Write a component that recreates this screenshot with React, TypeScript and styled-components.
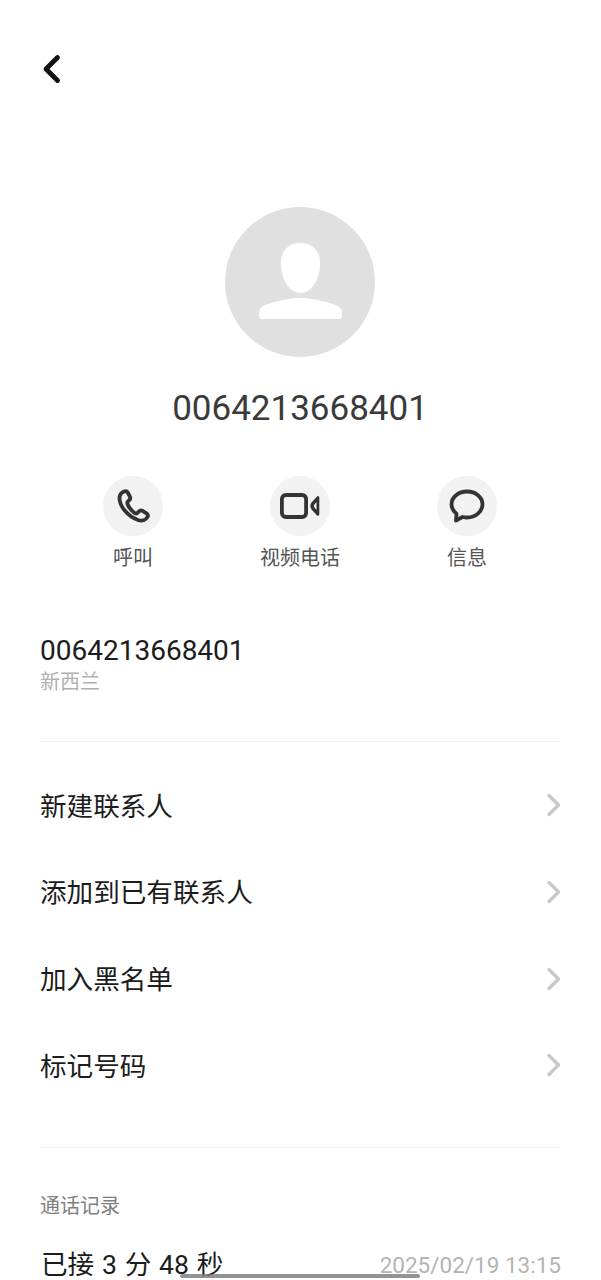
import React from 'react';
import styled, { createGlobalStyle } from 'styled-components';

const GlobalStyle = createGlobalStyle`
  html, body {
    margin: 0;
    padding: 0;
    background: #fff;
  }
  body {
    font-family: Roboto, "Noto Sans CJK SC", sans-serif;
  }
`;

const Screen = styled.div`
  position: relative;
  width: 601px;
  height: 1280px;
  overflow: hidden;
  background: #fff;
  box-sizing: border-box;
  padding: 0 40px;
`;

const BackButton = styled.div`
  height: 207px;
  padding-top: 52px;
  box-sizing: border-box;
  svg {
    display: block;
  }
`;

const Profile = styled.div`
  display: flex;
  flex-direction: column;
  align-items: center;
  padding-right: 1px;
`;

const Avatar = styled.div`
  width: 150px;
  height: 150px;
  border-radius: 50%;
  background: #e0e0e0;
  display: flex;
  align-items: center;
  justify-content: center;
`;

const Title = styled.div`
  margin-top: 30px;
  font-size: 35px;
  line-height: 44px;
  color: #3a3a3a;
`;

const Actions = styled.div`
  display: grid;
  grid-template-columns: repeat(3, 167px);
  justify-content: center;
  margin-top: 45px;
  padding-right: 1px;
`;

const Action = styled.div`
  display: flex;
  flex-direction: column;
  align-items: center;
`;

const ActionCircle = styled.div`
  width: 60px;
  height: 60px;
  border-radius: 50%;
  background: #f2f2f2;
  display: flex;
  align-items: center;
  justify-content: center;
`;

const ActionLabel = styled.div`
  margin-top: 8px;
  font-size: 20px;
  line-height: 28px;
  color: #555;
`;

const NumberBlock = styled.div`
  margin-top: 61px;
  padding-bottom: 46px;
  border-bottom: 1px solid #f0f0f0;
`;

const Number = styled.div`
  font-size: 28px;
  line-height: 36px;
  color: #1c1c1c;
`;

const Region = styled.div`
  font-size: 20px;
  line-height: 26px;
  color: #b0b0b0;
`;

const MenuList = styled.div`
  padding: 19px 0 39px;
  border-bottom: 1px solid #f0f0f0;
`;

const MenuRow = styled.div`
  height: 86.67px;
  display: flex;
  align-items: center;
  justify-content: space-between;
  font-size: 26.6px;
  color: #1c1c1c;
  svg {
    margin-top: 2px;
  }
`;

const SectionLabel = styled.div`
  margin-top: 44px;
  font-size: 20px;
  line-height: 28px;
  color: #808080;
`;

const CallRow = styled.div`
  margin-top: 27px;
  display: flex;
  align-items: center;
  justify-content: space-between;
  line-height: 36px;
`;

const CallResult = styled.div`
  font-size: 26.6px;
  word-spacing: 1.2px;
  color: #1c1c1c;
  padding-left: 1px;
`;

const CallTime = styled.div`
  font-size: 22.5px;
  color: #b4b4b4;
`;

const HomeBar = styled.div`
  position: absolute;
  left: 180px;
  bottom: 2px;
  width: 240px;
  height: 4px;
  border-radius: 2px;
  background: rgba(120, 120, 120, 0.8);
`;

const Chevron = () => (
  <svg width="16" height="24" viewBox="0 0 16 24" fill="none">
    <path d="M4 2.500 L13.500 12 L4 21.500" stroke="#c8c8c8" strokeWidth="3.400" strokeLinecap="round" strokeLinejoin="round" />
  </svg>
);

const menuItems = ['新建联系人', '添加到已有联系人', '加入黑名单', '标记号码'];

export default function App() {
  return (
    <Screen>
      <GlobalStyle />
      <BackButton>
        <svg width="24" height="34" viewBox="0 0 24 34" fill="none">
          <path d="M17.500 5.500 L6 17 L17.500 28.500" stroke="#111" strokeWidth="4.800" strokeLinecap="round" strokeLinejoin="round" />
        </svg>
      </BackButton>
      <Profile>
        <Avatar>
          <svg width="150" height="150" viewBox="0 0 150 150">
            <path d="M75.500 36 C87 36 95 43 95 56 C95 72 87 86 75.500 86 C64 86 56 72 56 56 C56 43 64 36 75.500 36 Z" fill="#fff" />
            <path d="M34 106 C34 100 40 97.500 48 95.500 C58 93 66 91 75.500 91 C85 91 93 93 103 95.500 C111 97.500 117 100 117 106 L117 109 C117 111 116 112 114 112 L37 112 C35 112 34 111 34 109 Z" fill="#fff" />
          </svg>
        </Avatar>
        <Title>0064213668401</Title>
      </Profile>
      <Actions>
        <Action>
          <ActionCircle>
            <svg width="36" height="36" viewBox="0 0 36 36" fill="none">
              <path d="M9 3.500 C6.500 4.500 4.500 7 4.500 10.500 C4.800 18 12 28 23 32 C27 33.300 31 32 32.500 29 C33.300 27.500 33 26.300 31.500 25.300 L27.500 22.800 C26 22 25 22.300 24 23.300 L22.500 24.800 C21.500 25.700 20.500 25.700 19.300 24.800 C16 22.300 13.800 19.300 12.500 16 C12 14.800 12.300 14 13.200 13.200 L14.500 12 C15.500 11 15.500 10 15 8.800 L13 4.800 C12 3.300 10.700 3 9 3.500 Z" stroke="#333" strokeWidth="3.800" strokeLinejoin="round" />
            </svg>
          </ActionCircle>
          <ActionLabel>呼叫</ActionLabel>
        </Action>
        <Action>
          <ActionCircle>
            <svg width="42" height="30" viewBox="0 0 42 30" fill="none">
              <rect x="2.900" y="4" width="24.200" height="22" rx="4" stroke="#333" strokeWidth="3.800" />
              <path d="M39 6.500 L39 23.500 L33.500 17.500 C32.500 16 32.500 14 33.500 12.500 Z" stroke="#333" strokeWidth="2.600" strokeLinejoin="round" fill="#333" />
              <path d="M37.500 11 L37.500 19 L35.300 16.300 C34.800 15.500 34.800 14.500 35.300 13.700 Z" fill="#f2f2f2" />
            </svg>
          </ActionCircle>
          <ActionLabel>视频电话</ActionLabel>
        </Action>
        <Action>
          <ActionCircle>
            <svg width="38" height="36" viewBox="0 0 38 36" fill="none">
              <path d="M19 3.500 C27.500 3.500 34.500 9 34.500 16.300 C34.500 23.500 27.500 29.500 19 29.500 C17.500 29.500 16 29.300 14.500 29 L8 32.500 L8.500 25.800 C5.500 23.300 3.500 19.800 3.500 16.300 C3.500 9 10.500 3.500 19 3.500 Z" stroke="#333" strokeWidth="3.800" strokeLinejoin="round" />
            </svg>
          </ActionCircle>
          <ActionLabel>信息</ActionLabel>
        </Action>
      </Actions>
      <NumberBlock>
        <Number>0064213668401</Number>
        <Region>新西兰</Region>
      </NumberBlock>
      <MenuList>
        {menuItems.map(item => (
          <MenuRow key={item}>
            {item}
            <Chevron />
          </MenuRow>
        ))}
      </MenuList>
      <SectionLabel>通话记录</SectionLabel>
      <CallRow>
        <CallResult>已接 3 分 48 秒</CallResult>
        <CallTime>2025/02/19 13:15</CallTime>
      </CallRow>
      <HomeBar />
    </Screen>
  );
}
